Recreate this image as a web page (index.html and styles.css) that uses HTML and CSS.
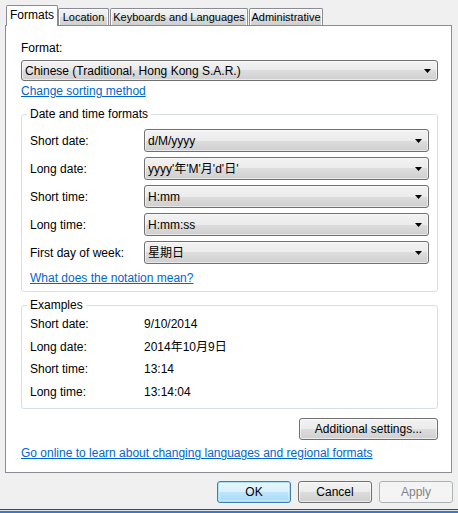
FILE: index.html
```html
<!DOCTYPE html>
<html>
<head>
<meta charset="utf-8">
<link rel="stylesheet" href="styles.css">
</head>
<body>
<div class="dialog">
  <div class="tabs">
    <div class="tab active tab-formats">Formats</div>
    <div class="tab tab-location">Location</div>
    <div class="tab tab-keyboards">Keyboards and Languages</div>
    <div class="tab tab-admin">Administrative</div>
  </div>
  <div class="panel">
    <div class="label">Format:</div>
    <div class="combo combo-format"><span class="combo-text">Chinese (Traditional, Hong Kong S.A.R.)</span><svg class="arrow" width="7" height="4" viewBox="0 0 7 4"><path d="M0 0H7L3.5 4Z" fill="#000"/></svg></div>
    <div class="link-line"><a class="link" href="#">Change sorting method</a></div>

    <fieldset class="group group-formats">
      <legend>Date and time formats</legend>
      <div class="fmt-grid">
        <div class="row-label">Short date:</div>
        <div class="combo"><span class="combo-text">d/M/yyyy</span><svg class="arrow" width="7" height="4" viewBox="0 0 7 4"><path d="M0 0H7L3.5 4Z" fill="#000"/></svg></div>
        <div class="row-label">Long date:</div>
        <div class="combo"><span class="combo-text">yyyy'年'M'月'd'日'</span><svg class="arrow" width="7" height="4" viewBox="0 0 7 4"><path d="M0 0H7L3.5 4Z" fill="#000"/></svg></div>
        <div class="row-label">Short time:</div>
        <div class="combo"><span class="combo-text">H:mm</span><svg class="arrow" width="7" height="4" viewBox="0 0 7 4"><path d="M0 0H7L3.5 4Z" fill="#000"/></svg></div>
        <div class="row-label">Long time:</div>
        <div class="combo"><span class="combo-text">H:mm:ss</span><svg class="arrow" width="7" height="4" viewBox="0 0 7 4"><path d="M0 0H7L3.5 4Z" fill="#000"/></svg></div>
        <div class="row-label">First day of week:</div>
        <div class="combo"><span class="combo-text">星期日</span><svg class="arrow" width="7" height="4" viewBox="0 0 7 4"><path d="M0 0H7L3.5 4Z" fill="#000"/></svg></div>
      </div>
      <div class="link-line notation"><a class="link" href="#">What does the notation mean?</a></div>
    </fieldset>

    <fieldset class="group group-examples">
      <legend>Examples</legend>
      <div class="ex-grid">
        <div>Short date:</div><div>9/10/2014</div>
        <div>Long date:</div><div>2014年10月9日</div>
        <div>Short time:</div><div>13:14</div>
        <div>Long time:</div><div>13:14:04</div>
      </div>
    </fieldset>

    <div class="right-row"><button class="btn btn-additional">Additional settings...</button></div>
    <div class="link-line online"><a class="link" href="#">Go online to learn about changing languages and regional formats</a></div>
  </div>

  <div class="actions">
    <button class="btn btn-default">OK</button>
    <button class="btn">Cancel</button>
    <button class="btn btn-disabled">Apply</button>
  </div>
  <div class="frame-bottom"></div>
</div>
</body>
</html>
```

FILE: styles.css
```css
* { box-sizing: border-box; }

html, body {
  margin: 0;
  padding: 0;
  background: #f0f0f0;
}

body {
  font-family: "Liberation Sans", "Noto Sans CJK TC", Arial, sans-serif;
  font-size: 12px;
  line-height: 16px;
  color: #000;
}

.dialog {
  height: 513px;
  display: flex;
  flex-direction: column;
}

/* Tabs */
.tabs {
  display: flex;
  align-items: flex-end;
  height: 20px;
  margin: 5px 0 0 6px;
  position: relative;
  z-index: 1;
}

.tab {
  height: 17px;
  padding: 0;
  border: 1px solid #898c95;
  border-bottom: none;
  border-radius: 2px 2px 0 0;
  background: linear-gradient(#f2f2f2 0%, #ebebeb 50%, #dddddd 50%, #cfcfcf 100%);
  box-shadow: inset 1px 1px 0 #fcfcfc, inset -1px 0 0 #fcfcfc;
  font-size: 11px;
  line-height: 16px;
  text-align: center;
  white-space: nowrap;
  margin-left: 1px;
}

.tab:first-child { margin-left: 0; }

.tab.active {
  height: 21px;
  margin-bottom: -1px;
  background: #fff;
  box-shadow: none;
  font-size: 12px;
  line-height: 19px;
  position: relative;
}

.tab.active + .tab { margin-left: 0; }

.tab-formats { width: 52px; }
.tab-location { width: 51px; }
.tab-keyboards { width: 138px; }
.tab-admin { width: 74px; }

/* Panel */
.panel {
  margin: 0 6px 0 5px;
  height: 448px;
  background: #fff;
  border: 1px solid #898c95;
  padding: 14px 13px 0 15px;
}

.label { height: 16px; }

.combo {
  display: flex;
  align-items: center;
  height: 23px;
  border: 1px solid #707070;
  border-radius: 3px;
  background: linear-gradient(#f2f2f2 0%, #ebebeb 50%, #dddddd 50%, #cfcfcf 100%);
  box-shadow: inset 0 0 0 1px rgba(255, 255, 255, 0.55);
  padding: 0 6px 0 3px;
}

.combo-format {
  margin-top: 4px;
  height: 21px;
}

.combo-text {
  flex: 1;
  white-space: nowrap;
  overflow: hidden;
}

.arrow { flex: none; display: block; }

.link-line { height: 16px; }

.link {
  color: #0066cc;
  text-decoration: underline;
}

.combo-format + .link-line { margin-top: 2px; }

/* Group boxes */
.group {
  margin: 0;
  border: 1px solid #d5dfe5;
  border-radius: 3px;
  padding: 0 8px;
  min-width: 0;
}

.group legend {
  padding: 0 3px;
  margin-left: -3px;
  line-height: 16px;
}

.group-formats {
  margin-top: 7px;
  padding-top: 7px;
  padding-bottom: 5px;
}

.fmt-grid {
  display: grid;
  grid-template-columns: 114px 1fr;
  row-gap: 5px;
  align-items: center;
}

.notation { margin-top: 6px; }

.group-examples {
  margin-top: 5px;
  padding-top: 0;
  padding-bottom: 5px;
}

.ex-grid {
  display: grid;
  grid-template-columns: 114px 1fr;
  grid-auto-rows: 22.6px;
  align-items: center;
}

/* Buttons */
.btn {
  font: inherit;
  color: #000;
  height: 22px;
  border: 1px solid #707070;
  border-radius: 3px;
  background: linear-gradient(#f2f2f2 0%, #ebebeb 50%, #dddddd 50%, #cfcfcf 100%);
  box-shadow: inset 0 0 0 1px rgba(255, 255, 255, 0.6);
  padding: 0;
  line-height: 18px;
}

.right-row {
  display: flex;
  justify-content: flex-end;
  margin-top: 9px;
}

.btn-additional { width: 139px; }

.online { margin-top: 5px; }

.actions {
  display: flex;
  justify-content: flex-end;
  gap: 7px;
  margin: 8px 5px 0 0;
}

.actions .btn { width: 74px; }

.btn-default {
  border-color: #3c7fb1;
  box-shadow: inset 0 0 0 1px #a6e0f7, inset 0 0 0 2px rgba(255, 255, 255, 0.3);
  background: linear-gradient(#eaf6fd 0%, #d9f0fc 50%, #bee6fd 50%, #a7d9f5 100%);
}

.btn-disabled {
  border-color: #adb2b5;
  background: #f4f4f4;
  box-shadow: none;
  color: #838383;
}

.frame-bottom {
  margin-top: auto;
  height: 4px;
  border-top: 1px solid #2c4a7c;
  background: linear-gradient(#dfe6ef 0, #dfe6ef 1px, #3f78c0 1px, #3f78c0 100%);
}
```
